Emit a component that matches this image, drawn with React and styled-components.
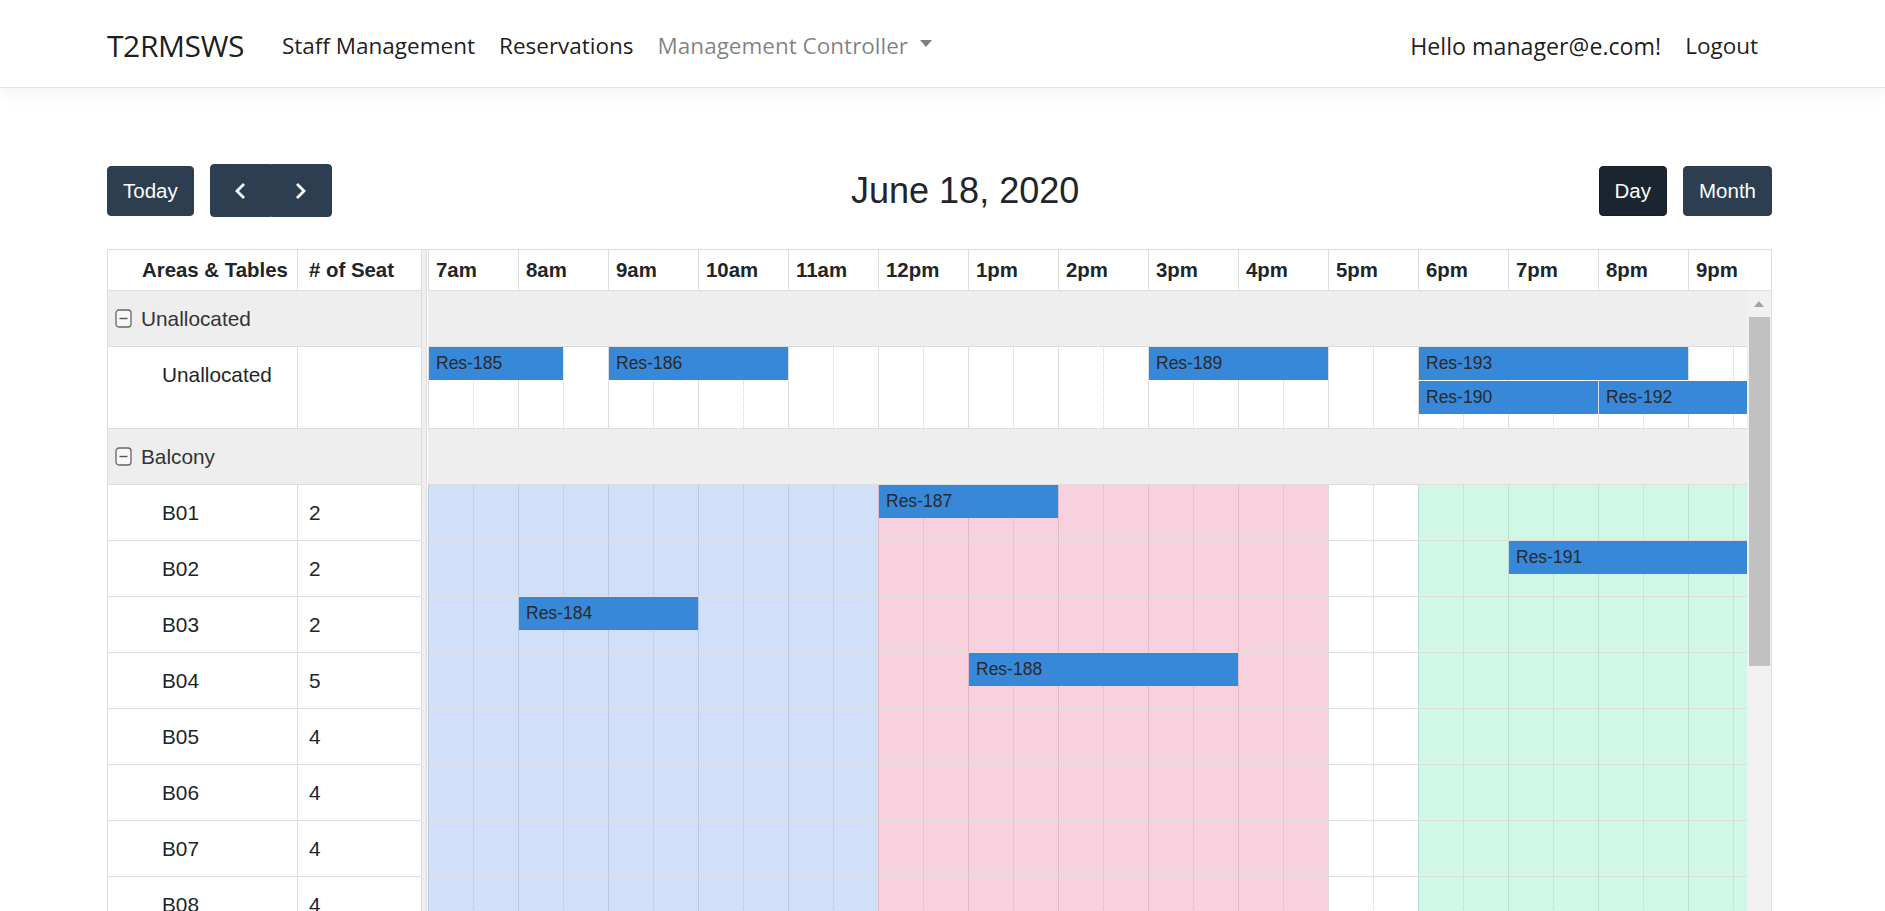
import React from 'react';
import styled, { createGlobalStyle } from 'styled-components';

const GlobalStyle = createGlobalStyle`
  *, *::before, *::after { box-sizing: border-box; }
  html, body { margin: 0; padding: 0; height: 100%; overflow: hidden; background: #fff; }
  body { font-family: "Liberation Sans", Arial, sans-serif; color: #212529; }
`;

const HOUR = 90;
const TRACK = 15 * HOUR;

/* ---------- Navbar ---------- */
const Navbar = styled.nav`
  height: 88px;
  padding-top: 4px;
  background: #fff;
  border-bottom: 1px solid #dee2e6;
  box-shadow: 0 6px 18px rgba(0, 0, 0, 0.05);
  display: flex;
  align-items: center;
  font-family: "Open Sans", "Noto Sans", sans-serif;
`;
const NavInner = styled.div`
  margin-left: 107px;
  width: 1663px;
  display: flex;
  align-items: center;
`;
const Brand = styled.a`
  font-size: 30px;
  color: rgba(0, 0, 0, 0.9);
  margin-right: 26px;
  letter-spacing: -0.4px;
`;
const NavList = styled.div`
  display: flex;
  align-items: center;
`;
const NavRight = styled.div`
  margin-left: auto;
  display: flex;
  align-items: center;
`;
const NavLink = styled.a`
  font-size: 22.5px;
  padding: 0 12px;
  color: ${(p) => (p.$muted ? 'rgba(0,0,0,0.5)' : 'rgba(0,0,0,0.9)')};
  display: flex;
  align-items: center;
  white-space: nowrap;
`;
const NavText = styled.span`
  font-size: 23.2px;
  padding: 0 12px;
  color: rgba(0, 0, 0, 0.9);
  white-space: nowrap;
`;
const Caret = styled.span`
  display: inline-block;
  margin-left: 12px;
  width: 0;
  height: 0;
  border-left: 6.5px solid transparent;
  border-right: 6.5px solid transparent;
  border-top: 7px solid rgba(0, 0, 0, 0.5);
  margin-top: -4px;
`;

/* ---------- Toolbar ---------- */
const Main = styled.main`
  margin-left: 107px;
  width: 1665px;
`;
const Toolbar = styled.div`
  margin-top: 76px;
  height: 53px;
  margin-bottom: 32px;
  display: flex;
  align-items: center;
  justify-content: space-between;
`;
const ToolGroup = styled.div`
  display: flex;
  align-items: center;
  gap: 16px;
`;
const Button = styled.button`
  height: 50px;
  padding: 0 15px;
  font-family: "Liberation Sans", Arial, sans-serif;
  font-size: 20.5px;
  color: #fff;
  background: ${(p) => (p.$active ? '#1a252f' : '#2c3e50')};
  border: 1px solid ${(p) => (p.$active ? '#151e27' : '#2c3e50')};
  border-radius: 4px;
  display: flex;
  align-items: center;
`;
const ButtonGroup = styled.div`
  display: flex;
`;
const IconButton = styled.button`
  width: 61px;
  height: 53px;
  padding: 0;
  background: #2c3e50;
  border: 1px solid #2c3e50;
  display: flex;
  align-items: center;
  justify-content: center;
  &:first-child { border-radius: 4px 0 0 4px; }
  &:last-child { border-radius: 0 4px 4px 0; }
`;
const Title = styled.h2`
  margin: 0;
  font-size: 36px;
  font-weight: 400;
  color: #212529;
`;

const Chevron = ({ dir }) => (
  <svg width="14" height="20" viewBox="0 0 14 20">
    <polyline
      points={dir === 'left' ? '11,3 4,10 11,17' : '3,3 10,10 3,17'}
      fill="none"
      stroke="#fff"
      strokeWidth="2.8"
    />
  </svg>
);

/* ---------- Calendar ---------- */
const Calendar = styled.div`
  display: flex;
  border: 1px solid #ddd;
  border-bottom: none;
  background: #fff;
`;
const ResourceArea = styled.div`
  width: 313px;
  flex: 0 0 313px;
`;
const Splitter = styled.div`
  flex: 0 0 6px;
  background: #eee;
  border-left: 1px solid #ddd;
  border-right: 1px solid #ddd;
`;
const TimeArea = styled.div`
  flex: 0 0 1344px;
  width: 1344px;
  padding-left: 1px;
  overflow: hidden;
`;
const HeaderRow = styled.div`
  display: flex;
  height: 41px;
  border-bottom: 1px solid #ddd;
`;
const HeadCell = styled.div`
  flex: 0 0 ${(p) => p.$w}px;
  width: ${(p) => p.$w}px;
  padding-left: ${(p) => p.$pad}px;
  border-right: ${(p) => (p.$divider ? '1px solid #ddd' : 'none')};
  display: flex;
  align-items: center;
  font-weight: 700;
  font-size: 20.4px;
  color: #212529;
  white-space: nowrap;
`;
const HourCell = styled.div`
  flex: 0 0 ${HOUR}px;
  border-left: 1px solid #ddd;
  padding-left: 7px;
  display: flex;
  align-items: center;
  font-weight: 700;
  font-size: 20.4px;
  color: #212529;
  white-space: nowrap;
`;
const ResRow = styled.div`
  display: flex;
  height: ${(p) => p.$h}px;
  border-bottom: 1px solid #ddd;
  background: ${(p) => (p.$group ? '#eee' : '#fff')};
`;
const ResCell = styled.div`
  flex: 0 0 ${(p) => p.$w}px;
  width: ${(p) => p.$w}px;
  padding-left: ${(p) => p.$pad}px;
  border-right: ${(p) => (p.$divider ? '1px solid #ddd' : 'none')};
  font-size: 20.8px;
  line-height: 55px;
  color: #212529;
  white-space: nowrap;
`;
const GroupCell = styled.div`
  display: flex;
  align-items: center;
  gap: 9px;
  padding-left: 7px;
  font-size: 20.8px;
  color: #333;
`;

const MinusBox = () => (
  <svg width="17" height="19" viewBox="0 0 17 19">
    <rect x="1" y="1" width="15" height="17" rx="3" fill="#f7f7f7" stroke="#666" strokeWidth="1.3" />
    <line x1="4.5" y1="9.5" x2="12.5" y2="9.5" stroke="#555" strokeWidth="1.4" />
  </svg>
);

const TimeBody = styled.div`
  display: flex;
`;
const LaneViewport = styled.div`
  flex: 0 0 1319px;
  width: 1319px;
  overflow: hidden;
`;
const LaneTrack = styled.div`
  width: ${TRACK}px;
`;
const Lane = styled.div`
  position: relative;
  height: ${(p) => p.$h}px;
  border-bottom: 1px solid #ddd;
  background: ${(p) => (p.$group ? '#eee' : '#fff')};
`;
const Slats = styled.div`
  display: flex;
  height: 100%;
`;
const Slot = styled.div`
  flex: 0 0 ${HOUR / 2}px;
  height: 100%;
  border-left: 1px ${(p) => (p.$major ? 'solid #ddd' : 'dotted #d2d2d2')};
`;
const Zone = styled.div`
  position: absolute;
  top: 0;
  bottom: 0;
  background: ${(p) => p.$color};
`;
const Event = styled.div`
  position: absolute;
  height: 33px;
  background: #3788d8;
  border: 1px solid #3788d8;
  padding-left: 6px;
  display: flex;
  align-items: center;
  font-size: 17.5px;
  color: #2a2a2a;
  white-space: nowrap;
  overflow: hidden;
`;
const ScrollTrack = styled.div`
  flex: 0 0 24px;
  width: 24px;
  background: #f1f1f1;
  display: flex;
  flex-direction: column;
  align-items: center;
  min-height: 700px;
`;
const ScrollArrow = styled.div`
  margin-top: 10px;
  width: 0;
  height: 0;
  border-left: 5.5px solid transparent;
  border-right: 5.5px solid transparent;
  border-bottom: 6px solid #a3a3a3;
`;
const ScrollThumb = styled.div`
  margin-top: 10px;
  width: 21px;
  height: 349px;
  background: #c1c1c1;
`;

const HOURS = ['7am', '8am', '9am', '10am', '11am', '12pm', '1pm', '2pm', '3pm', '4pm', '5pm', '6pm', '7pm', '8pm', '9pm'];

const ZONES = [
  { start: 0, end: 5, color: 'rgba(102,148,235,0.3)' },
  { start: 5, end: 10, color: 'rgba(232,102,148,0.3)' },
  { start: 11, end: 16, color: 'rgba(102,232,176,0.3)' },
];

const ROWS = [
  { type: 'group', label: 'Unallocated' },
  {
    type: 'resource', name: 'Unallocated', seats: '', h: 82, zones: false,
    events: [
      { id: 185, s: 0, e: 1.5, lv: 0 },
      { id: 186, s: 2, e: 4, lv: 0 },
      { id: 189, s: 8, e: 10, lv: 0 },
      { id: 193, s: 11, e: 14, lv: 0 },
      { id: 190, s: 11, e: 13, lv: 1 },
      { id: 192, s: 13, e: 15, lv: 1 },
    ],
  },
  { type: 'group', label: 'Balcony' },
  { type: 'resource', name: 'B01', seats: 2, zones: true, events: [{ id: 187, s: 5, e: 7, lv: 0 }] },
  { type: 'resource', name: 'B02', seats: 2, zones: true, events: [{ id: 191, s: 12, e: 15, lv: 0 }] },
  { type: 'resource', name: 'B03', seats: 2, zones: true, events: [{ id: 184, s: 1, e: 3, lv: 0 }] },
  { type: 'resource', name: 'B04', seats: 5, zones: true, events: [{ id: 188, s: 6, e: 9, lv: 0 }] },
  { type: 'resource', name: 'B05', seats: 4, zones: true, events: [] },
  { type: 'resource', name: 'B06', seats: 4, zones: true, events: [] },
  { type: 'resource', name: 'B07', seats: 4, zones: true, events: [] },
  { type: 'resource', name: 'B08', seats: 4, zones: true, events: [] },
  { type: 'resource', name: 'B09', seats: 4, zones: true, events: [] },
  { type: 'resource', name: 'B10', seats: 4, zones: true, events: [] },
];

const SLOTS = Array.from({ length: 30 }, (_, i) => i);

export default function App() {
  return (
    <>
      <GlobalStyle />
      <Navbar>
        <NavInner>
          <Brand>T2RMSWS</Brand>
          <NavList>
            <NavLink>Staff Management</NavLink>
            <NavLink>Reservations</NavLink>
            <NavLink $muted>
              Management Controller <Caret />
            </NavLink>
          </NavList>
          <NavRight>
            <NavText>Hello manager@e.com!</NavText>
            <NavLink>Logout</NavLink>
          </NavRight>
        </NavInner>
      </Navbar>
      <Main>
        <Toolbar>
          <ToolGroup>
            <Button>Today</Button>
            <ButtonGroup>
              <IconButton aria-label="prev"><Chevron dir="left" /></IconButton>
              <IconButton aria-label="next"><Chevron dir="right" /></IconButton>
            </ButtonGroup>
          </ToolGroup>
          <Title>June 18, 2020</Title>
          <ToolGroup>
            <Button $active>Day</Button>
            <Button>Month</Button>
          </ToolGroup>
        </Toolbar>
        <Calendar>
          <ResourceArea>
            <HeaderRow>
              <HeadCell $w={190} $pad={34} $divider>Areas &amp; Tables</HeadCell>
              <HeadCell $w={123} $pad={11}># of Seat</HeadCell>
            </HeaderRow>
            {ROWS.map((r, i) =>
              r.type === 'group' ? (
                <ResRow key={i} $h={56} $group>
                  <GroupCell><MinusBox />{r.label}</GroupCell>
                </ResRow>
              ) : (
                <ResRow key={i} $h={r.h || 56}>
                  <ResCell $w={190} $pad={54} $divider>{r.name}</ResCell>
                  <ResCell $w={123} $pad={11}>{r.seats}</ResCell>
                </ResRow>
              )
            )}
          </ResourceArea>
          <Splitter />
          <TimeArea>
            <HeaderRow>
              {HOURS.map((h) => (
                <HourCell key={h}>{h}</HourCell>
              ))}
            </HeaderRow>
            <TimeBody>
              <LaneViewport>
                <LaneTrack>
                  {ROWS.map((r, i) =>
                    r.type === 'group' ? (
                      <Lane key={i} $h={56} $group />
                    ) : (
                      <Lane key={i} $h={r.h || 56}>
                        <Slats>
                          {SLOTS.map((s) => (
                            <Slot key={s} $major={s % 2 === 0} />
                          ))}
                        </Slats>
                        {r.zones &&
                          ZONES.map((z, k) => (
                            <Zone
                              key={k}
                              $color={z.color}
                              style={{ left: z.start * HOUR, width: (z.end - z.start) * HOUR }}
                            />
                          ))}
                        {r.events.map((ev) => (
                          <Event
                            key={ev.id}
                            style={{
                              left: ev.s * HOUR + 1,
                              width: (ev.e - ev.s) * HOUR - 1,
                              top: ev.lv * 34,
                            }}
                          >
                            Res-{ev.id}
                          </Event>
                        ))}
                      </Lane>
                    )
                  )}
                </LaneTrack>
              </LaneViewport>
              <ScrollTrack>
                <ScrollArrow />
                <ScrollThumb />
              </ScrollTrack>
            </TimeBody>
          </TimeArea>
        </Calendar>
      </Main>
    </>
  );
}
